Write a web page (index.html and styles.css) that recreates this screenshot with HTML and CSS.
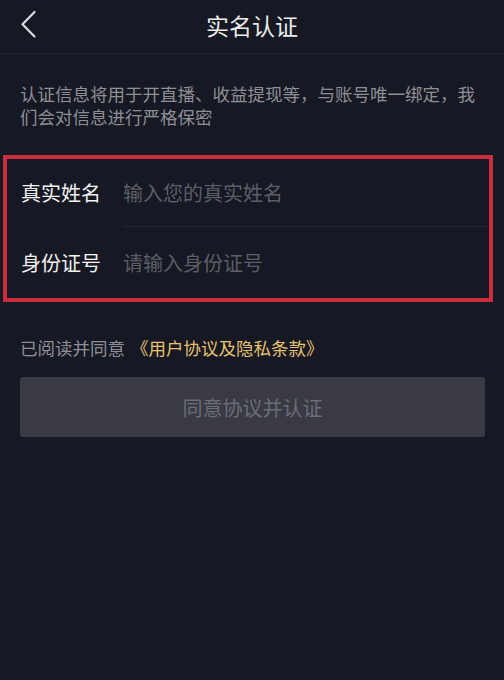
FILE: index.html
```html
<!DOCTYPE html>
<html lang="zh-CN">
<head>
<meta charset="utf-8">
<title>实名认证</title>
<link rel="stylesheet" href="styles.css">
</head>
<body>
<div class="page">
  <header class="nav">
    <span class="back">
      <svg width="20" height="30" viewBox="0 0 20 30"><path d="M14.5 2 L2.5 14.2 L14.5 26.4" fill="none" stroke="#dcdcdc" stroke-width="2.2" stroke-linecap="round" stroke-linejoin="round"/></svg>
    </span>
    <h1 class="title">实名认证</h1>
  </header>

  <p class="desc">认证信息将用于开直播、收益提现等，与账号唯一绑定，我们会对信息进行严格保密</p>

  <section class="form">
    <div class="row">
      <span class="label">真实姓名</span>
      <span class="field">输入您的真实姓名</span>
    </div>
    <div class="row">
      <span class="label">身份证号</span>
      <span class="field">请输入身份证号</span>
    </div>
  </section>

  <p class="agree">已阅读并同意 <span class="link">《用户协议及隐私条款》</span></p>

  <div class="btn">同意协议并认证</div>
</div>
</body>
</html>
```

FILE: styles.css
```css
html, body {
  margin: 0;
  padding: 0;
  background: #161823;
}
body {
  font-family: "Noto Sans CJK SC", "Noto Sans", sans-serif;
  width: 504px;
  height: 680px;
  overflow: hidden;
}
.page {
  display: flex;
  flex-direction: column;
}
.nav {
  height: 53px;
  border-bottom: 1px solid #22232d;
  display: flex;
  align-items: center;
  justify-content: center;
  position: relative;
}
.back {
  position: absolute;
  left: 20px;
  top: 10px;
  display: flex;
}
.title {
  margin: 0;
  font-size: 23px;
  font-weight: 400;
  color: #ececec;
  line-height: 1;
  margin-top: -2px;
}
.desc {
  margin: 28px 24px 0 20px;
  font-size: 17.5px;
  line-height: 23px;
  color: #8e8f95;
}
.form {
  margin: 27px 11px 0 3px;
  border: 4px solid #c92d3d;
  display: flex;
  flex-direction: column;
}
.row {
  display: flex;
  align-items: center;
  height: 71px;
  padding-left: 14px;
}
.row:first-child {
  background: linear-gradient(#262731, #262731) no-repeat 116px 100% / calc(100% - 116px) 1px;
  height: 68px;
  box-sizing: border-box;
  padding-bottom: 1px;
}
.label {
  width: 102px;
  font-size: 20px;
  color: #f2f2f2;
}
.field {
  font-size: 20px;
  color: #5c5e67;
}
.agree {
  margin: 34px 0 0 20px;
  font-size: 17.5px;
  line-height: 24px;
  color: #8e8f95;
}
.link {
  color: #e6c271;
  margin-left: 2px;
}
.btn {
  margin: 17px 19px 0 20px;
  height: 60px;
  border-radius: 3px;
  background: #393a44;
  color: #6c6d76;
  font-size: 20px;
  display: flex;
  align-items: center;
  justify-content: center;
}
```
